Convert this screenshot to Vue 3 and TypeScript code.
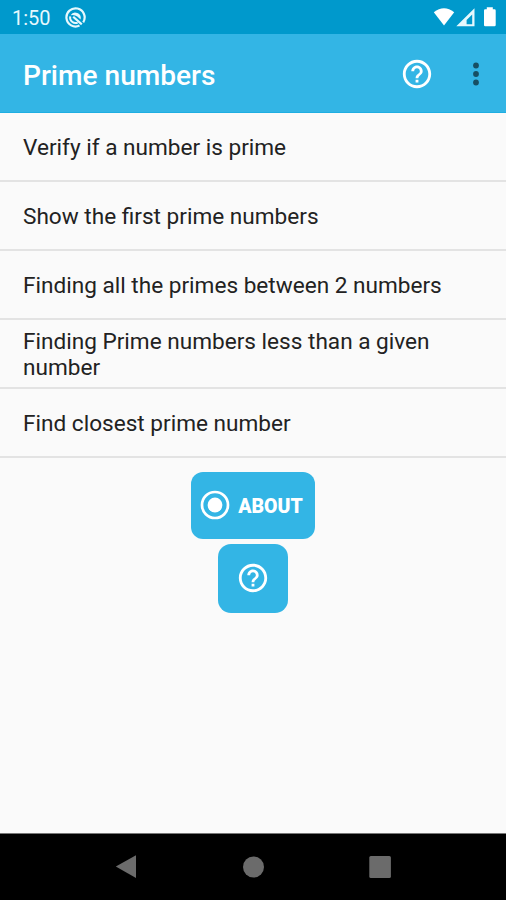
<script setup lang="ts">
const items: string[] = [
  'Verify if a number is prime',
  'Show the first prime numbers',
  'Finding all the primes between 2 numbers',
  'Finding Prime numbers less than a given number',
  'Find closest prime number',
]

const helpPath =
  'M11 18h2v-2h-2v2zm1-16C6.48 2 2 6.48 2 12s4.48 10 10 10 10-4.48 10-10S17.52 2 12 2zm0 18c-4.41 0-8-3.59-8-8s3.59-8 8-8 8 3.59 8 8-3.59 8-8 8zm0-14c-2.21 0-4 1.79-4 4h2c0-1.1.9-2 2-2s2 .9 2 2c0 2-3 1.75-3 5h2c0-2.25 3-2.5 3-5 0-2.21-1.79-4-4-4z'
</script>

<template>
  <div class="screen">
    <div class="status">
      <span class="clock">1:50</span>
      <svg class="notice" viewBox="0 0 21 21">
        <path d="M14.5 18.6A9.1 9.1 0 1 1 18.2 15.3" fill="none" stroke="#e6f8fd" stroke-width="2.2" />
        <path d="M5.6 8.2A5.5 5.5 0 0 1 15.6 12.4L12.3 9.6Q9.5 7.4 5.6 8.2Z" fill="#e6f8fd" />
        <path d="M5.2 9.4A5.5 5.5 0 0 0 12.7 15.6" fill="none" stroke="#e6f8fd" stroke-width="1.9" />
        <path d="M8.2 9.8L16.8 17.4" stroke="#e6f8fd" stroke-width="2.2" />
      </svg>
      <svg class="signals" viewBox="0 0 66 22">
        <path d="M.8 5.2Q11 -2.8 21.2 5.2L11 18.5Z" fill="#fff" />
        <path fill-rule="evenodd" d="M23.3 19.2L41.5 1.2V19.2ZM33.6 17.2H39.2V7.5L33.6 13Z" fill="#e6f8fd" />
        <path d="M53.8.2H59.8V2.2H61.5Q62.7 2.2 62.7 3.4V18Q62.7 19.2 61.5 19.2H52.2Q51 19.2 51 18V3.4Q51 2.2 52.2 2.2H53.8Z" fill="#fff" />
      </svg>
    </div>
    <header class="bar">
      <h1>Prime numbers</h1>
      <svg class="help" viewBox="0 0 24 24"><path :d="helpPath" fill="#fff" /></svg>
      <svg class="more" viewBox="0 0 8 24">
        <circle cx="4" cy="3.5" r="2.9" />
        <circle cx="4" cy="12" r="2.9" />
        <circle cx="4" cy="20.5" r="2.9" />
      </svg>
    </header>
    <ul class="list">
      <li v-for="item in items" :key="item"><span>{{ item }}</span></li>
    </ul>
    <main class="actions">
      <button class="about">
        <svg viewBox="0 0 30 30">
          <circle cx="15" cy="15" r="13" fill="none" stroke="#fff" stroke-width="2.7" />
          <circle cx="15" cy="15" r="7.4" fill="#fff" />
        </svg>
        <span>ABOUT</span>
      </button>
      <button class="info">
        <svg class="help" viewBox="0 0 24 24"><path :d="helpPath" fill="#fff" /></svg>
      </button>
    </main>
    <nav class="nav">
      <svg viewBox="0 0 24 26"><path d="M1.8 12.6L22 1.2V24Z" /></svg>
      <svg viewBox="0 0 24 26"><circle cx="12.5" cy="13" r="10.5" /></svg>
      <svg viewBox="0 0 24 26"><rect x="1.3" y="2" width="21.6" height="22" rx="1.5" /></svg>
    </nav>
  </div>
</template>

<style>
body {
  margin: 0;
}
</style>

<style scoped>
.screen {
  width: 506px;
  height: 900px;
  display: flex;
  flex-direction: column;
  background: #fafafa;
  font-family: Roboto, sans-serif;
  overflow: hidden;
}
svg {
  display: block;
  flex: none;
}
.status {
  height: 34px;
  flex: none;
  display: flex;
  align-items: center;
  box-sizing: border-box;
  padding: 1px 7px 0 12px;
  background: #0099cc;
}
.clock {
  width: 53px;
  font-size: 20px;
  line-height: 24px;
  color: #e6f8fd;
}
.notice {
  width: 21px;
  height: 21px;
}
.signals {
  width: 66px;
  height: 22px;
  margin-left: auto;
}
.bar {
  height: 79px;
  flex: none;
  box-sizing: border-box;
  display: flex;
  align-items: center;
  padding: 2px 26px 0 23px;
  background: #33b5e5;
  border-bottom: 1px solid #1eaee2;
}
h1 {
  margin: 0;
  padding-top: 4px;
  flex: 1;
  font-size: 28.1px;
  line-height: 32px;
  font-weight: 500;
  color: #fff;
}
.help {
  width: 34px;
  height: 34px;
}
.more {
  width: 8px;
  height: 24px;
  margin-left: 38px;
  fill: #174f63;
}
.list {
  list-style: none;
  margin: 0;
  padding: 0;
}
.list li {
  height: 69px;
  box-sizing: border-box;
  display: flex;
  align-items: center;
  padding: 3px 23px 0;
  border-bottom: 2px solid #e3e3e3;
  font-size: 22.6px;
  line-height: 26px;
  color: #222;
}
.actions {
  flex: 1;
  display: flex;
  flex-direction: column;
  align-items: center;
  gap: 5px;
  padding-top: 14px;
}
button {
  border: 0;
  padding: 0;
  margin: 0;
  display: flex;
  align-items: center;
  background: #33b5e5;
  color: #fff;
  font-family: inherit;
}
.about {
  width: 123.5px;
  height: 66.5px;
  box-sizing: border-box;
  padding: 0 0 0 9px;
  gap: 8px;
  border-radius: 12px;
  font-size: 19.5px;
  font-weight: 900;
}
.about svg {
  width: 30px;
  height: 30px;
}
.about span {
  padding-top: 2px;
}
.info {
  width: 70px;
  height: 69.5px;
  justify-content: center;
  border-radius: 13px;
}
.nav {
  height: 67px;
  flex: none;
  box-sizing: border-box;
  display: flex;
  align-items: center;
  justify-content: space-between;
  padding: 0 114px;
  border-top: 1px solid #777;
  background: #000;
}
.nav svg {
  width: 24px;
  height: 26px;
  fill: #6b6b6b;
}
</style>
